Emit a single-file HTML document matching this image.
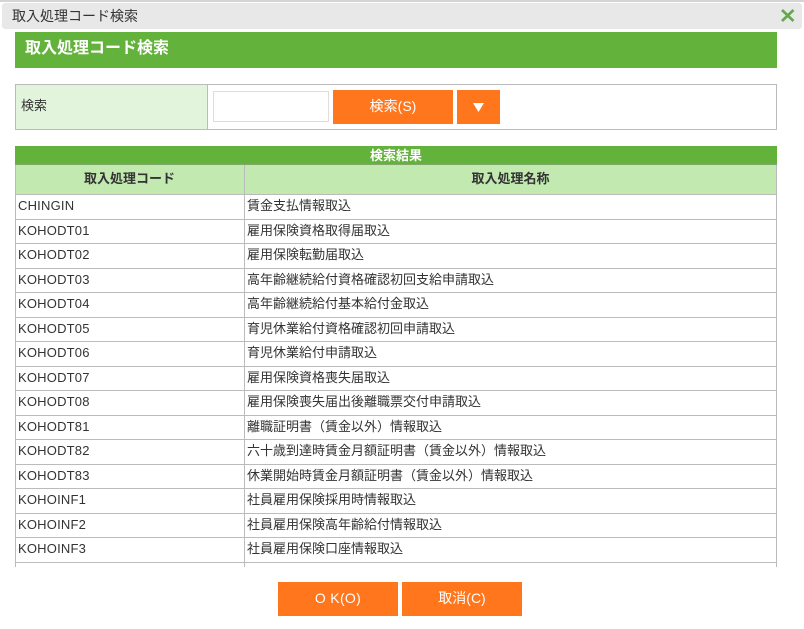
<!DOCTYPE html>
<html lang="ja"><head><meta charset="utf-8"><title>取入処理コード検索</title>
<style>
html,body{margin:0;padding:0;width:804px;height:629px;overflow:hidden;background:#fff}
body{position:relative;font:13px/1 "Liberation Sans","Noto Sans CJK JP",sans-serif;color:#333}
div{position:absolute;box-sizing:border-box;white-space:nowrap}
.btn{background:#ff761c;color:#fff;text-align:center;height:34px;line-height:33px;font-size:14px}
.th{top:165px;height:29px;line-height:27px;text-align:center;font-weight:bold;background:#c2e9b0}
.h{left:15px;width:762px;height:1px;background:#bbb}
.c{left:18px;line-height:18px;height:18px;letter-spacing:.2px;margin-top:1px}
.n{left:247px;line-height:18px;height:18px;margin-top:1px}
</style></head><body>
<div style="left:0;top:0;width:804px;height:2px;background:#d4d4d4"></div>
<div style="left:2px;top:3px;width:800px;height:26px;background:#e8e8e8;border-radius:3px"></div>
<div style="left:12px;top:7px;font-size:14px;line-height:18px;color:#333">取入処理コード検索</div>
<svg style="position:absolute;left:780px;top:8px" width="15" height="15" viewBox="0 0 15 15"><path d="M2 2L13.5 13M13.5 2L2 13" stroke="#63a84e" stroke-width="2.6" fill="none"/></svg>
<div style="left:15px;top:32px;width:762px;height:36px;background:#62b23c"></div>
<div style="left:25px;top:39px;font-size:16px;line-height:20px;font-weight:bold;color:#fff">取入処理コード検索</div>

<div style="left:15px;top:84px;width:762px;height:46px;border:1px solid #bbb"></div>
<div style="left:16px;top:85px;width:192px;height:44px;background:#e2f4dc;border-right:1px solid #bbb"></div>
<div style="left:21px;top:97px;line-height:18px">検索</div>
<div style="left:213px;top:91px;width:116px;height:31px;background:#fff;border:1px solid #ddd"></div>
<div class="btn" style="left:333px;top:90px;width:120px">検索(S)</div>
<div class="btn" style="left:457px;top:90px;width:43px"></div>
<svg style="position:absolute;left:473px;top:103px" width="11" height="9" viewBox="0 0 11 9"><path d="M0 0H11L5.5 9Z" fill="#fff"/></svg>

<div style="left:15px;top:146px;width:762px;height:19px;background:#62b23c;border-bottom:1px solid #7fa86a"></div>
<div style="left:15px;top:148px;width:762px;text-align:center;font-weight:bold;color:#fff;line-height:16px">検索結果</div>
<div class="th" style="left:15px;width:229px">取入処理コード</div>
<div class="th" style="left:245px;width:531px">取入処理名称</div>

<div style="left:15px;top:165px;width:1px;height:402px;background:#bbb"></div>
<div style="left:244px;top:165px;width:1px;height:402px;background:#bbb"></div>
<div style="left:776px;top:165px;width:1px;height:402px;background:#bbb"></div>

<div class="h" style="top:194px"></div>
<div class="h" style="top:219px"></div>
<div class="h" style="top:243px"></div>
<div class="h" style="top:268px"></div>
<div class="h" style="top:292px"></div>
<div class="h" style="top:317px"></div>
<div class="h" style="top:341px"></div>
<div class="h" style="top:366px"></div>
<div class="h" style="top:390px"></div>
<div class="h" style="top:415px"></div>
<div class="h" style="top:439px"></div>
<div class="h" style="top:464px"></div>
<div class="h" style="top:488px"></div>
<div class="h" style="top:513px"></div>
<div class="h" style="top:537px"></div>
<div class="h" style="top:562px"></div>

<div class="c" style="top:196px">CHINGIN</div><div class="n" style="top:196px">賃金支払情報取込</div>
<div class="c" style="top:221px">KOHODT01</div><div class="n" style="top:221px">雇用保険資格取得届取込</div>
<div class="c" style="top:245px">KOHODT02</div><div class="n" style="top:245px">雇用保険転勤届取込</div>
<div class="c" style="top:270px">KOHODT03</div><div class="n" style="top:270px">高年齢継続給付資格確認初回支給申請取込</div>
<div class="c" style="top:294px">KOHODT04</div><div class="n" style="top:294px">高年齢継続給付基本給付金取込</div>
<div class="c" style="top:319px">KOHODT05</div><div class="n" style="top:319px">育児休業給付資格確認初回申請取込</div>
<div class="c" style="top:343px">KOHODT06</div><div class="n" style="top:343px">育児休業給付申請取込</div>
<div class="c" style="top:368px">KOHODT07</div><div class="n" style="top:368px">雇用保険資格喪失届取込</div>
<div class="c" style="top:392px">KOHODT08</div><div class="n" style="top:392px">雇用保険喪失届出後離職票交付申請取込</div>
<div class="c" style="top:417px">KOHODT81</div><div class="n" style="top:417px">離職証明書（賃金以外）情報取込</div>
<div class="c" style="top:441px">KOHODT82</div><div class="n" style="top:441px">六十歳到達時賃金月額証明書（賃金以外）情報取込</div>
<div class="c" style="top:466px">KOHODT83</div><div class="n" style="top:466px">休業開始時賃金月額証明書（賃金以外）情報取込</div>
<div class="c" style="top:490px">KOHOINF1</div><div class="n" style="top:490px">社員雇用保険採用時情報取込</div>
<div class="c" style="top:515px">KOHOINF2</div><div class="n" style="top:515px">社員雇用保険高年齢給付情報取込</div>
<div class="c" style="top:539px">KOHOINF3</div><div class="n" style="top:539px">社員雇用保険口座情報取込</div>

<div class="btn" style="left:278px;top:582px;width:120px;letter-spacing:.3px">O K(O)</div>
<div class="btn" style="left:402px;top:582px;width:120px">取消(C)</div>
</body></html>
